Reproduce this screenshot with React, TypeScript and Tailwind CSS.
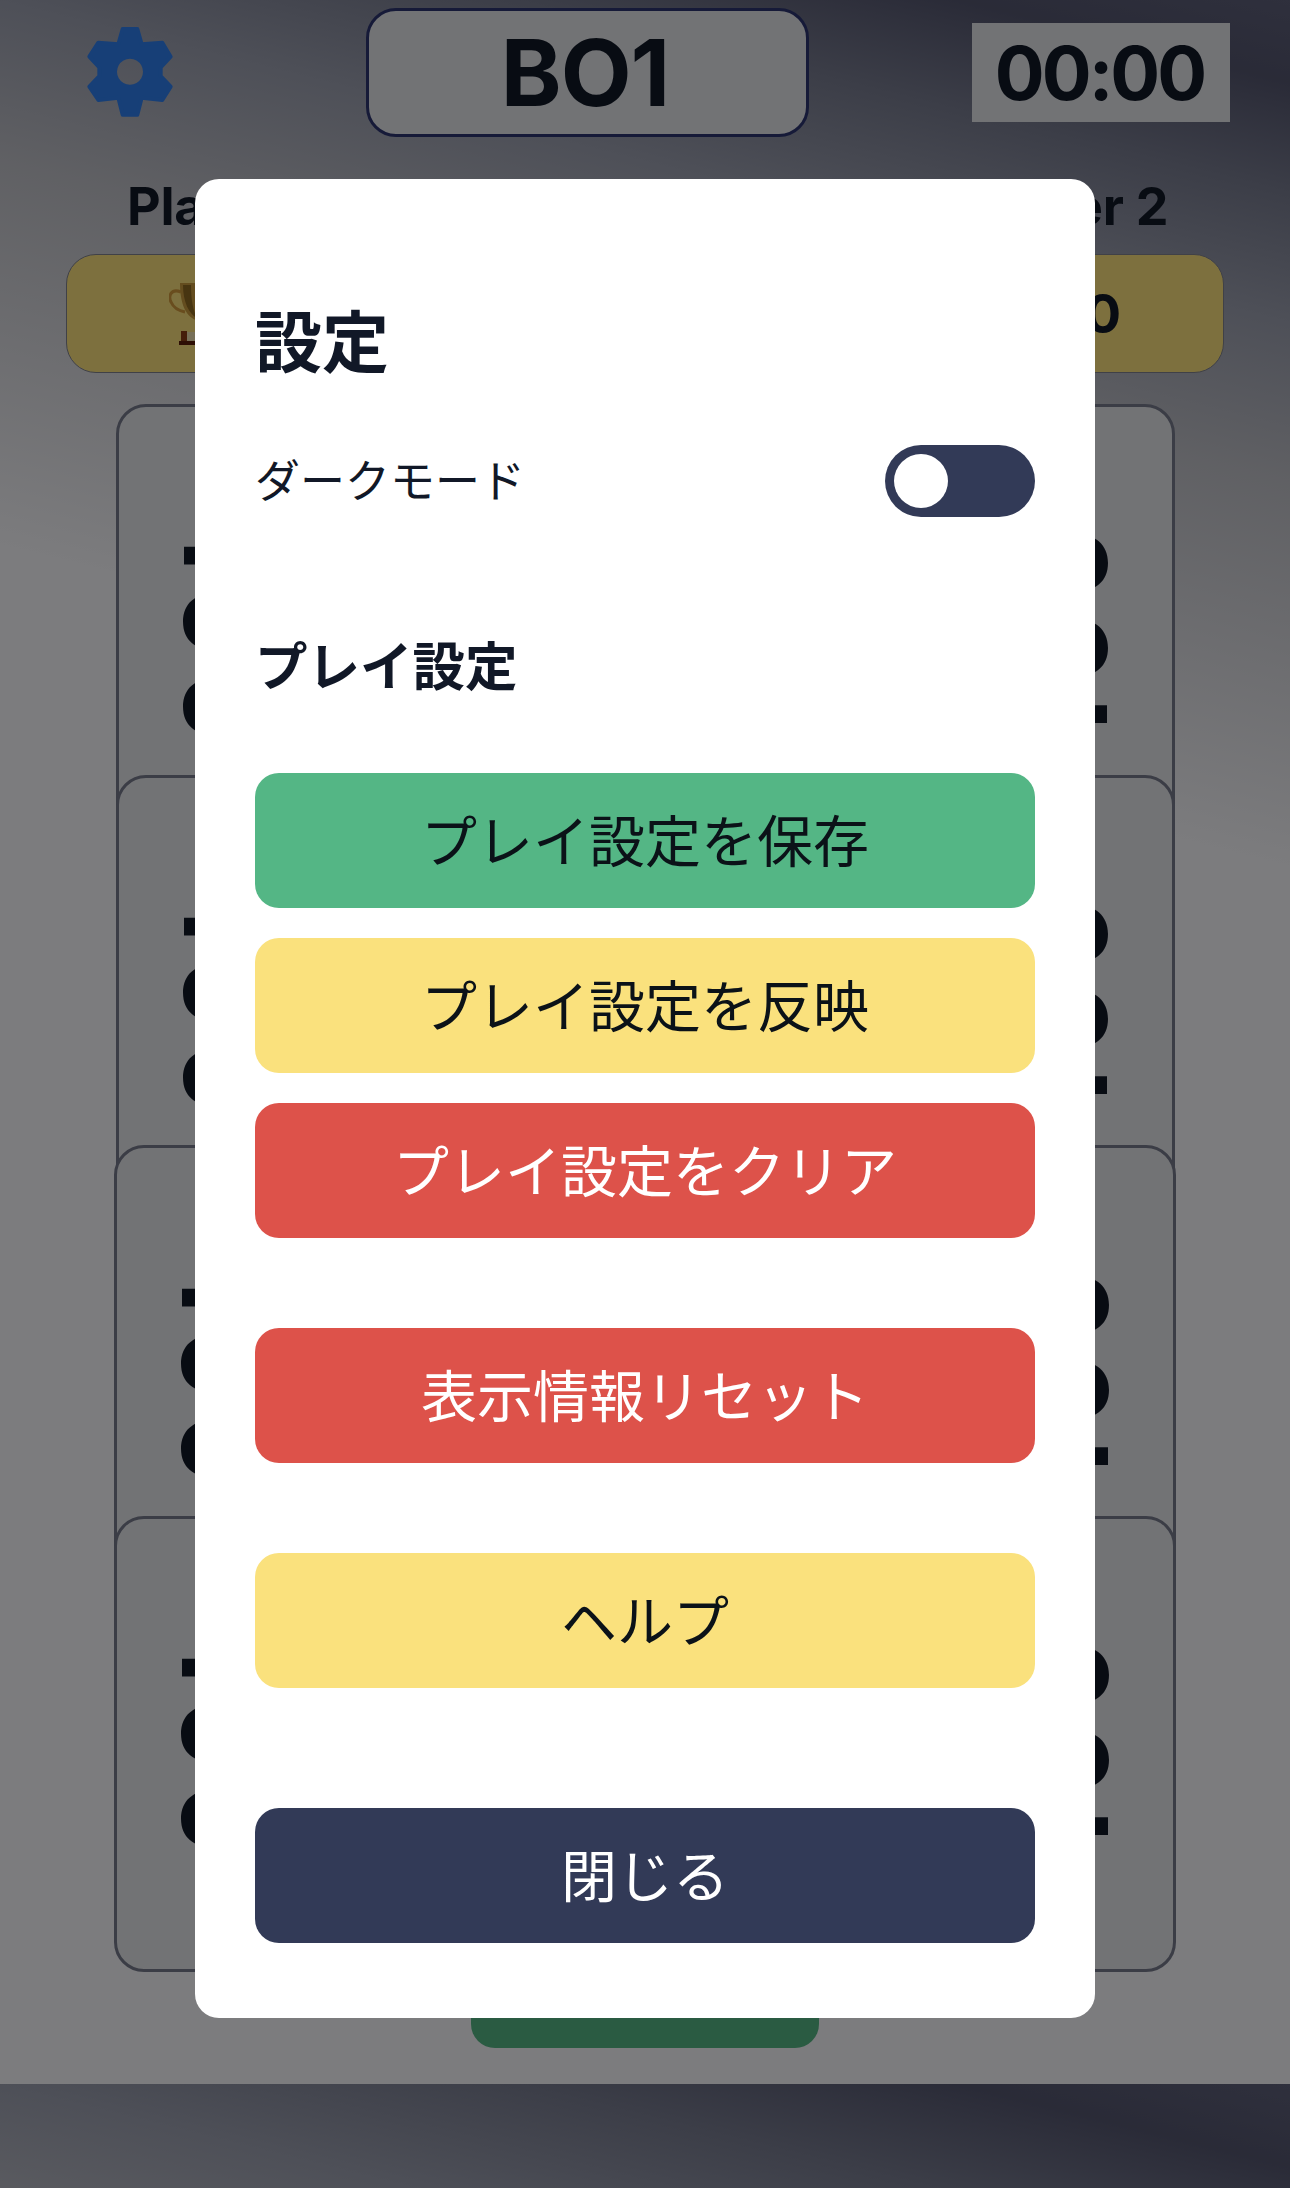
import React from "react";

const sans = "font-['Inter','Noto_Sans_CJK_JP',sans-serif]";

function Gear() {
  const poly =
    "M158 57 L202 57 L215 103 L277 98 L302 140 L272 172 L272 198 L302 230 L277 270 L215 263 L202 314 L158 314 L145 263 L85 270 L58 230 L88 198 L88 172 L58 140 L85 98 L145 103 Z";
  return (
    <svg viewBox="0 0 360 360" className="w-[120px] h-[120px] block">
      <path d={poly + " M180 146 a39 39 0 1 0 0.01 0 Z"} fill="#2e7fee" fillRule="evenodd" />
      <path d={poly} fill="none" stroke="#2e7fee" strokeWidth="12" strokeLinejoin="round" />
    </svg>
  );
}

function Trophy() {
  return (
    <svg viewBox="0 0 60 63" className="w-[60px] h-[63px] block shrink-0">
      <path d="M12 10 C2 6 -1 14 2 20 C5 27 11 29 16 30" fill="none" stroke="#d29a3c" strokeWidth="3" />
      <path d="M48 10 C58 6 61 14 58 20 C55 27 49 29 44 30" fill="none" stroke="#d29a3c" strokeWidth="3" />
      <path d="M11 1 H49 C49 20 44 34 33 38 V46 H27 V38 C16 34 11 20 11 1 Z" fill="#c99a3e" />
      <path d="M14 3 H22 C22 18 24 28 28 36 C20 32 14 20 14 3 Z" fill="#8f6a22" />
      <path d="M16 50 H44 V60 H16 Z" fill="#efe0b0" />
      <path d="M12 49 H18 V60 H12 Z M42 49 H48 V60 H42 Z" fill="#8a3c14" />
      <path d="M10 59 H50 V63 H10 Z" fill="#5a1c08" />
    </svg>
  );
}

function ScoreBar() {
  return (
    <div className="w-[314px] h-[119px] box-border rounded-[30px] border-[1.5px] border-[#80828f] bg-[#fae17d] flex items-center justify-center gap-[12px]">
      <Trophy />
      <span className="text-[54px] leading-none font-bold text-[#111827]">0</span>
    </div>
  );
}

function Card({ wide }: { wide?: boolean }) {
  return (
    <div
      className={
        (wide ? "w-[1062px]" : "w-[1059px]") +
        " h-[456px] -mt-[85.33px] first:mt-0 box-border rounded-[30px] border-[3px] border-[#767a8c] bg-[#e5e7eb] flex items-center justify-between pl-[52px] pr-[52px]"
      }
    >
      <div className="[writing-mode:vertical-rl] text-[90px] leading-[90px] font-black text-[#111827] tracking-[21px] mt-[24px]">
        100
      </div>
      <div className="[writing-mode:vertical-rl] rotate-180 text-[90px] leading-[90px] font-black text-[#111827] tracking-[21px] -mt-[12px]">
        100
      </div>
    </div>
  );
}

function Btn({ bg, fg, mt, children }: { bg: string; fg: string; mt: string; children: React.ReactNode }) {
  return (
    <button className={`${bg} ${fg} ${mt} w-full h-[135px] pt-[2px] rounded-[24px] text-[56px] leading-none font-normal flex items-center justify-center`}>
      {children}
    </button>
  );
}

export default function App() {
  return (
    <div
      className={`${sans} relative w-full h-[2188px] overflow-hidden bg-[linear-gradient(14deg,#f8f8fc_64%,#c0c1c8_80%,#9ca0b0_86.6%,#787c90_92%,#54566f_96.6%,#5e607a_100%)] bg-[length:100%_2084px] bg-repeat`}
    >
      <header className="flex items-start pl-[70px] pt-[8px]">
        <div className="mt-[2px]">
          <Gear />
        </div>
        <div className="ml-[176px] w-[443px] h-[129px] box-border pr-[5px] rounded-[30px] border-[3px] border-[#2c3470] bg-[#e5e7eb] flex items-center justify-center text-[92px] leading-none font-bold tracking-[-1px] text-[#111827]">
          BO1
        </div>
        <div className="ml-[163px] mt-[15px] w-[258px] h-[99px] pr-[3px] bg-[#e5e7eb] flex items-center justify-center text-[74px] leading-none font-bold tracking-[-3px] text-[#111827]">
          00:00
        </div>
      </header>

      <div className="mt-[40px] flex justify-between pl-[66px] pr-[66px] text-[52px] leading-[60px] font-bold tracking-[-0.3px] text-[#111827]">
        <div className="w-[314px] text-center">Player 1</div>
        <div className="w-[314px] text-center">Player 2</div>
      </div>

      <div className="mt-[17px] flex justify-between pl-[66px] pr-[66px]">
        <ScoreBar />
        <ScoreBar />
      </div>

      <div className="mt-[31px] flex flex-col items-center">
        <Card />
        <Card />
        <Card wide />
        <Card wide />
      </div>

      <div className="mt-[20px] mx-auto w-[348px] h-[56px] rounded-[24px] bg-[#54b685]" />

      <div className="absolute inset-0 bg-black/50 flex justify-center items-start pt-[179px]">
        <div className="w-[900px] box-border bg-white rounded-[24px] px-[60px] pt-[128px] pb-[75px] text-[#111827]">
          <h2 className="text-[67px] leading-[72px] font-bold">設定</h2>
          <div className="mt-[66px] flex items-center justify-between h-[72px]">
            <span className="text-[45px] leading-none">ダークモード</span>
            <div className="w-[150px] h-[72px] rounded-full bg-[#323a57] flex items-center pl-[9px]">
              <div className="w-[54px] h-[54px] rounded-full bg-white" />
            </div>
          </div>
          <h3 className="mt-[120px] text-[52.5px] leading-[60px] font-bold">プレイ設定</h3>
          <Btn bg="bg-[#54b685]" fg="text-[#0b1218]" mt="mt-[76px]">プレイ設定を保存</Btn>
          <Btn bg="bg-[#fae17d]" fg="text-[#0b1218]" mt="mt-[30px]">プレイ設定を反映</Btn>
          <Btn bg="bg-[#dd524a]" fg="text-white" mt="mt-[30px]">プレイ設定をクリア</Btn>
          <Btn bg="bg-[#dd524a]" fg="text-white" mt="mt-[90px]">表示情報リセット</Btn>
          <Btn bg="bg-[#fae17d]" fg="text-[#0b1218]" mt="mt-[90px]">ヘルプ</Btn>
          <Btn bg="bg-[#323a57]" fg="text-white" mt="mt-[120px]">閉じる</Btn>
        </div>
      </div>
    </div>
  );
}
